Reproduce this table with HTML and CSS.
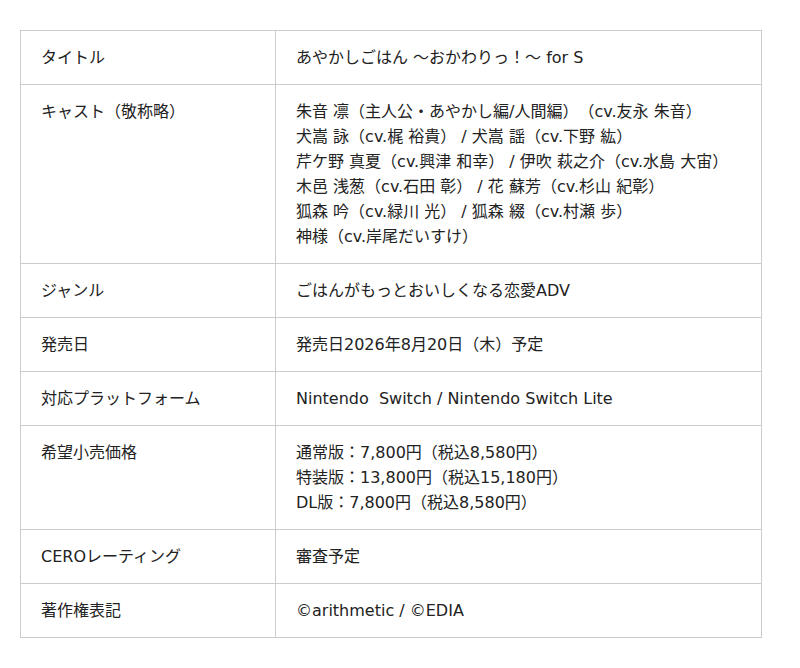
FILE: index.html
```html
<!DOCTYPE html>
<html lang="ja">
<head>
<meta charset="utf-8">
<link rel="stylesheet" href="styles.css">
</head>
<body>
<div class="wrap">
<table class="spec">
<tr><th>タイトル</th><td>あやかしごはん 〜おかわりっ！〜 for S</td></tr>
<tr><th>キャスト（敬称略）</th><td>朱音 凛（主人公・あやかし編/人間編）（cv.友永 朱音）<br>犬嵩 詠（cv.梶 裕貴） / 犬嵩 謡（cv.下野 紘）<br>芹ケ野 真夏（cv.興津 和幸） / 伊吹 萩之介（cv.水島 大宙）<br>木邑 浅葱（cv.石田 彰） / 花 蘇芳（cv.杉山 紀彰）<br>狐森 吟（cv.緑川 光） / 狐森 綴（cv.村瀬 歩）<br>神様（cv.岸尾だいすけ）</td></tr>
<tr><th>ジャンル</th><td>ごはんがもっとおいしくなる恋愛ADV</td></tr>
<tr><th>発売日</th><td>発売日2026年8月20日（木）予定</td></tr>
<tr><th>対応プラットフォーム</th><td>Nintendo&nbsp; Switch / Nintendo Switch Lite</td></tr>
<tr><th>希望小売価格</th><td>通常版：7,800円（税込8,580円）<br>特装版：13,800円（税込15,180円）<br>DL版：7,800円（税込8,580円）</td></tr>
<tr><th>CEROレーティング</th><td>審査予定</td></tr>
<tr><th>著作権表記</th><td>©arithmetic / ©EDIA</td></tr>
</table>
</div>
</body>
</html>
```
FILE: styles.css
```css
html, body {
  margin: 0;
  padding: 0;
  background: #fff;
}
.wrap {
  padding: 30px 0 0 20px;
}
.spec {
  width: 742px;
  border-collapse: collapse;
  font-family: "DejaVu Sans", "Noto Sans CJK JP", sans-serif;
  font-size: 16px;
  line-height: 25px;
  color: #222;
  text-spacing-trim: space-all;
}
.spec th, .spec td {
  border: 1px solid #ccc;
  padding: 14px 20px;
  text-align: left;
  vertical-align: top;
  font-weight: normal;
}
.spec th {
  width: 214px;
}
```
